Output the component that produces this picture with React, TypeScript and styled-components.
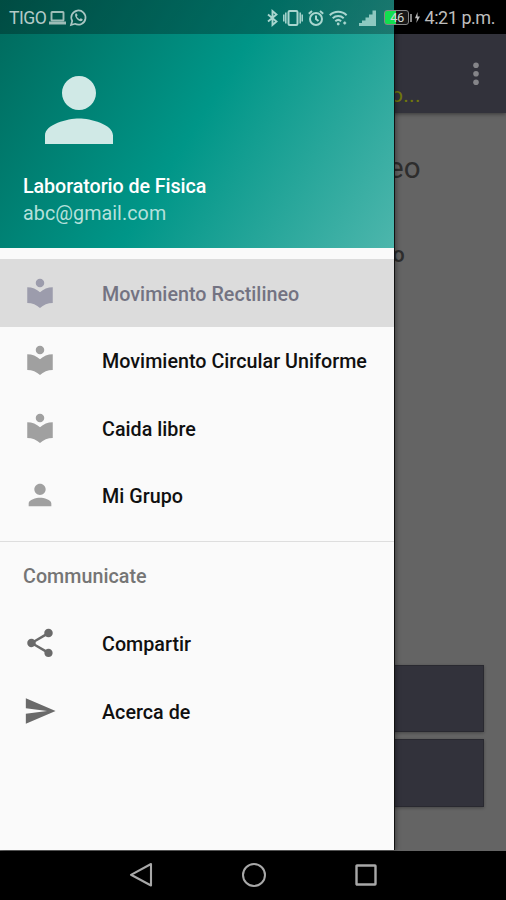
import React from "react";
import styled, { createGlobalStyle } from "styled-components";

const GlobalStyle = createGlobalStyle`
  * { box-sizing: border-box; }
  body { margin: 0; background: #000; font-family: Roboto, "Liberation Sans", sans-serif; }
`;

const Phone = styled.div`
  position: relative;
  display: flex;
  flex-direction: column;
  width: 506px;
  height: 900px;
  overflow: hidden;
  background: #000;
`;

const Screen = styled.div`
  display: flex;
  flex-direction: column;
  height: 850.5px;
  padding-top: 34px;
  background: #646464;
`;

const Toolbar = styled.header`
  display: flex;
  justify-content: space-between;
  flex: none;
  height: 78.5px;
  padding: 28px 26px 0 391px;
  background: #32323b;
  box-shadow: 0 1px 4px rgba(0, 0, 0, 0.45);
`;

const ToolbarTitle = styled.span`
  padding-top: 20px;
  font-size: 21px;
  line-height: 26px;
  letter-spacing: 0.3px;
  color: #71780b;
`;

const Content = styled.main`
  flex: 1;
  display: flex;
  flex-direction: column;
  padding: 37px 22px 44px 388px;
`;

const Heading = styled.h1`
  margin: 0;
  font-size: 29.5px;
  line-height: 36px;
  font-weight: 400;
  color: #2d2d2d;
`;

const Label = styled.p`
  margin: 56px 0 0 4.5px;
  font-size: 21.5px;
  line-height: 26px;
  font-weight: 500;
  color: #2d2d2d;
`;

const Actions = styled.div`
  display: flex;
  flex-direction: column;
  gap: 7px;
  margin-top: auto;
`;

const ActionButton = styled.button`
  height: 67.5px;
  padding: 0;
  border: 1px solid #292930;
  background: #32323b;
  box-shadow: 0 1px 3px rgba(0, 0, 0, 0.3);
`;

const Drawer = styled.aside`
  position: absolute;
  top: 0;
  left: 0;
  width: 394px;
  height: 850px;
  background: #fafafa;
  box-shadow: 1px 0 0 #111, 2px 0 5px rgba(0, 0, 0, 0.4);
`;

const DrawerHeader = styled.div`
  display: flex;
  flex-direction: column;
  height: 248px;
  padding: 59px 23px 0;
  background: linear-gradient(122.2deg, #00695c, #009688 50%, #4db6ac);
`;

const Avatar = styled.svg`
  width: 102px;
  height: 102px;
  margin-left: 5px;
  fill: #d0e9e6;
`;

const AccountName = styled.div`
  margin-top: 12px;
  font-size: 19.7px;
  line-height: 27px;
  font-weight: 500;
  letter-spacing: -0.07px;
  color: #fff;
  white-space: nowrap;
`;

const AccountMail = styled.div`
  font-size: 19.7px;
  line-height: 27px;
  letter-spacing: 0.07px;
  color: #b5e0db;
`;

const Menu = styled.nav`
  padding-top: 11px;
`;

const MenuRow = styled.a<{ $active?: boolean }>`
  display: flex;
  align-items: center;
  gap: 45px;
  height: 67.5px;
  padding-left: 23px;
  font-size: 19.7px;
  font-weight: 500;
  letter-spacing: 0.03px;
  white-space: nowrap;
  color: ${(p) => (p.$active ? "#737382" : "#101010")};
  background: ${(p) => (p.$active ? "#dcdcdc" : "transparent")};
`;

const MenuLabel = styled.span`
  padding-top: 3px;
`;

const MenuIcon = styled.svg<{ $tone: string }>`
  flex: none;
  width: 34px;
  height: 34px;
  fill: ${(p) => p.$tone};
`;

const Divider = styled.hr`
  height: 1.4px;
  margin: 11.6px 0 0;
  border: 0;
  background: #dedede;
`;

const SectionTitle = styled.div`
  height: 67.4px;
  padding-left: 23px;
  font-size: 19.7px;
  line-height: 70px;
  font-weight: 500;
  letter-spacing: 0.03px;
  color: #757575;
`;

const StatusBar = styled.div`
  position: absolute;
  top: 0;
  left: 0;
  display: flex;
  justify-content: space-between;
  align-items: center;
  width: 506px;
  height: 34px;
  padding: 1px 11px 0 9px;
  font-size: 17.6px;
  color: #b5cbc8;
  background: linear-gradient(90deg, rgba(0, 0, 0, 0.28) 394px, #000 394px);
`;

const StatusGroup = styled.div<{ $gap: number }>`
  display: flex;
  align-items: center;
  gap: ${(p) => p.$gap}px;
`;

const Carrier = styled.span`
  width: 36px;
  font-size: 17.6px;
  letter-spacing: -0.5px;
`;

const Clock = styled.span`
  margin-left: 3px;
  font-size: 18px;
  letter-spacing: -0.45px;
  color: #bdbdbd;
  white-space: nowrap;
`;

const Glyph = styled.svg`
  display: block;
  flex: none;
  overflow: visible;
`;

const Battery = styled.div`
  position: relative;
  display: flex;
  align-items: center;
  justify-content: center;
  width: 25px;
  height: 15px;
  margin-left: 7px;
  border: 1.5px solid #868686;
  border-radius: 3px;
  background: linear-gradient(90deg, #12df4e 46%, #171717 46%);
  font-size: 13px;
  line-height: 12px;
  letter-spacing: -0.5px;
  color: #d0d8d3;

  &::after {
    content: "";
    position: absolute;
    right: -4px;
    width: 2px;
    height: 8px;
    background: #868686;
  }
`;

const NavigationBar = styled.footer`
  display: flex;
  align-items: center;
  justify-content: center;
  gap: 84.5px;
  flex: 1;
  padding-left: 1px;
`;

const PERSON =
  "M12 12c2.21 0 4-1.79 4-4s-1.79-4-4-4-4 1.79-4 4 1.79 4 4 4zm0 2c-2.67 0-8 1.34-8 4v2h16v-2c0-2.66-5.33-4-8-4z";
const LIBRARY =
  "M12 11.55C9.64 9.35 6.48 8 3 8v11c3.48 0 6.64 1.35 9 3.55 2.36-2.19 5.52-3.55 9-3.55V8c-3.48 0-6.64 1.35-9 3.55zM12 8c1.66 0 3-1.34 3-3s-1.34-3-3-3-3 1.34-3 3 1.34 3 3 3z";
const SHARE =
  "M18 16.08c-.76 0-1.44.3-1.96.77L8.91 12.7c.05-.23.09-.46.09-.7s-.04-.47-.09-.7l7.05-4.11c.54.5 1.25.81 2.04.81 1.66 0 3-1.34 3-3s-1.34-3-3-3-3 1.34-3 3c0 .24.04.47.09.7L8.04 9.81C7.5 9.31 6.79 9 6 9c-1.66 0-3 1.34-3 3s1.34 3 3 3c.79 0 1.5-.31 2.04-.81l7.12 4.16c-.05.21-.08.43-.08.65 0 1.61 1.31 2.92 2.92 2.92s2.92-1.31 2.92-2.92-1.31-2.92-2.92-2.92z";
const SEND = "M2.01 21L23 12 2.01 3 2 10l15 2-15 2z";

const mainItems = [
  { label: "Movimiento Rectilineo", icon: LIBRARY, tone: "#9c9cac", active: true },
  { label: "Movimiento Circular Uniforme", icon: LIBRARY, tone: "#a0a0a0" },
  { label: "Caida libre", icon: LIBRARY, tone: "#a0a0a0" },
  { label: "Mi Grupo", icon: PERSON, tone: "#a0a0a0" },
];

const communicateItems = [
  { label: "Compartir", icon: SHARE, tone: "#6a6a6a" },
  { label: "Acerca de", icon: SEND, tone: "#6a6a6a" },
];

type Item = { label: string; icon: string; tone: string; active?: boolean };

const MenuItem = ({ label, icon, tone, active }: Item) => (
  <MenuRow $active={active}>
    <MenuIcon viewBox="0 0 24 24" $tone={tone}>
      <path d={icon} />
    </MenuIcon>
    <MenuLabel>{label}</MenuLabel>
  </MenuRow>
);

const StatusIcons = () => (
  <>
    <Glyph width="11" height="16" viewBox="0 0 11 16" fill="none" stroke="#a9d6cf" strokeWidth="1.9">
      <path d="M1 4.5l8.5 7L5.5 15V1l4 3.5L1 11.5" />
    </Glyph>
    <Glyph width="20" height="16" viewBox="0 0 20 16" fill="none" stroke="#a9d6cf" strokeWidth="2">
      <rect x="5.5" y="1" width="9" height="14" rx="1.2" />
      <path d="M2.8 2.5v11M17.2 2.5v11M.8 4.5v7M19.2 4.5v7" strokeWidth="1.5" />
    </Glyph>
    <Glyph width="16" height="16" viewBox="0 0 16 16" fill="none" stroke="#a9d6cf" strokeWidth="2">
      <circle cx="8" cy="9" r="6" />
      <path d="M8 5.5V9l2.5 2M.8 3.8L4 1M15.2 3.8L12 1" />
    </Glyph>
    <Glyph width="19" height="16" viewBox="0 0 19 16" fill="none" stroke="#a9d6cf" strokeWidth="2">
      <path d="M.8 5.2a12 12 0 0 1 16.8 0M3.7 8.2a8 8 0 0 1 11 0M6.3 11.2a4.3 4.3 0 0 1 5.8 0" />
      <circle cx="9.2" cy="14" r="1.4" fill="#a9d6cf" stroke="none" />
      <path d="M14.2 13h3M15.7 11.5v3" strokeWidth="1.5" />
    </Glyph>
  </>
);

export default function App() {
  return (
    <>
      <GlobalStyle />
      <Phone>
        <Screen>
          <Toolbar>
            <ToolbarTitle>o...</ToolbarTitle>
            <Glyph width="8" height="24" viewBox="0 0 8 24" fill="#858589">
              <circle cx="4" cy="3.2" r="2.8" />
              <circle cx="4" cy="11.7" r="2.8" />
              <circle cx="4" cy="20.2" r="2.8" />
            </Glyph>
          </Toolbar>
          <Content>
            <Heading>eo</Heading>
            <Label>o</Label>
            <Actions>
              <ActionButton />
              <ActionButton />
            </Actions>
          </Content>
        </Screen>

        <Drawer>
          <DrawerHeader>
            <Avatar viewBox="0 0 24 24">
              <path d={PERSON} />
            </Avatar>
            <AccountName>Laboratorio de Fisica</AccountName>
            <AccountMail>abc@gmail.com</AccountMail>
          </DrawerHeader>
          <Menu>
            {mainItems.map((item) => (
              <MenuItem key={item.label} {...item} />
            ))}
            <Divider />
            <SectionTitle>Communicate</SectionTitle>
            {communicateItems.map((item) => (
              <MenuItem key={item.label} {...item} />
            ))}
          </Menu>
        </Drawer>

        <StatusBar>
          <StatusGroup $gap={4}>
            <Carrier>TIGO</Carrier>
            <Glyph width="17" height="14" viewBox="0 0 17 14" fill="none" stroke="#9dbcb7" strokeWidth="1.9">
              <rect x="2.5" y="1" width="12" height="8.5" rx=".6" />
              <path d="M0 12h17" strokeWidth="3" />
            </Glyph>
            <Glyph width="17" height="17" viewBox="0 0 17 17" fill="none" stroke="#a9c6c2" strokeWidth="1.7">
              <path d="M1 16l1.2-4A7.1 7.1 0 1 1 5 14.8z" />
              <path
                d="M5.2 5c.6-1 1.4-1 1.8-.1l.6 1.4-.8 1.2c.7 1.3 1.6 2.1 2.9 2.7l1-1 1.6.8c.8.5.3 1.5-.6 2C8.9 13 4.3 8.3 5.2 5z"
                fill="#a9c6c2"
                stroke="none"
              />
            </Glyph>
          </StatusGroup>
          <StatusGroup $gap={0}>
            <StatusGroup $gap={5}>
              <StatusIcons />
            </StatusGroup>
            <StatusGroup $gap={0}>
              <Glyph width="29" height="16" viewBox="0 0 29 16" fill="#8ec9c0">
                <path d="M11 16v-3h3v-2.500h3.500V7.500H21V4.500h3.500V.5h3.500V16z" />
              </Glyph>
              <Battery>46</Battery>
              <Glyph width="12" height="13" viewBox="0 0 12 13" fill="#bdbdbd">
                <path d="M8.5 1L6 7.300h2L7.300 12l3.700-6.500H8.600z" />
              </Glyph>
            </StatusGroup>
            <Clock>4:21 p.m.</Clock>
          </StatusGroup>
        </StatusBar>

        <NavigationBar>
          <Glyph width="28" height="26" viewBox="0 0 28 26" fill="none" stroke="#a8a8a8" strokeWidth="2.1">
            <path d="M24 2v21.500L4 12.800z" strokeLinejoin="round" />
          </Glyph>
          <Glyph width="28" height="26" viewBox="0 0 28 26" fill="none" stroke="#a8a8a8" strokeWidth="2">
            <circle cx="14" cy="13" r="11" />
          </Glyph>
          <Glyph width="28" height="26" viewBox="0 0 28 26" fill="none" stroke="#a8a8a8" strokeWidth="2.400">
            <rect x="4.500" y="3.500" width="19" height="19" rx=".5" />
          </Glyph>
        </NavigationBar>
      </Phone>
    </>
  );
}
